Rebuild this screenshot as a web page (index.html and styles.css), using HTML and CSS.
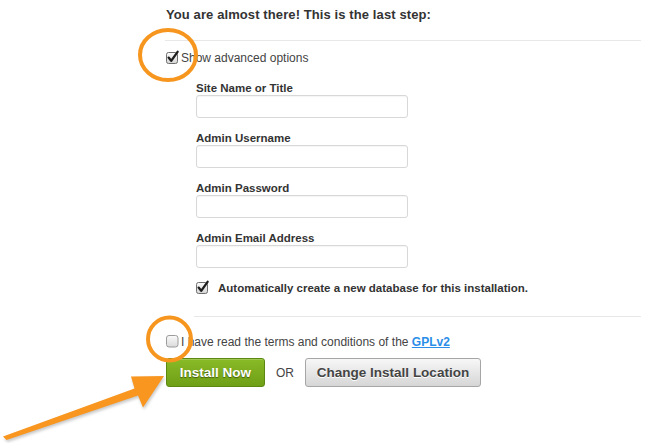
FILE: index.html
```html
<!DOCTYPE html>
<html>
<head>
<meta charset="utf-8">
<link rel="stylesheet" href="styles.css">
</head>
<body>
<div class="page">
  <div class="main">
    <h1 class="title">You are almost there! This is the last step:</h1>
    <div class="rule"></div>
    <label class="check-row adv">
      <span class="cb">
        <svg width="14" height="14" viewBox="0 0 14 14"><defs><linearGradient id="g1" x1="0" y1="0" x2="0" y2="1"><stop offset="0" stop-color="#fdfdfd"/><stop offset="1" stop-color="#d4d4d4"/></linearGradient></defs><rect x="0.5" y="1.5" width="11" height="11" rx="2" fill="url(#g1)" stroke="#6f6f6f"/><path d="M2.6 6.6 L5.2 9.8 L11.6 0.8" fill="none" stroke="#1e1e1e" stroke-width="2.3" stroke-linecap="round" stroke-linejoin="round"/></svg>
      </span>
      <span class="adv-text">Show advanced options</span>
    </label>
    <div class="fields">
      <div class="field">
        <label class="field-label">Site Name or Title</label>
        <input class="field-input" type="text">
      </div>
      <div class="field">
        <label class="field-label">Admin Username</label>
        <input class="field-input" type="text">
      </div>
      <div class="field">
        <label class="field-label">Admin Password</label>
        <input class="field-input" type="text">
      </div>
      <div class="field">
        <label class="field-label">Admin Email Address</label>
        <input class="field-input" type="text">
      </div>
      <label class="check-row auto">
        <span class="cb">
          <svg width="14" height="14" viewBox="0 0 14 14"><defs><linearGradient id="g2" x1="0" y1="0" x2="0" y2="1"><stop offset="0" stop-color="#fdfdfd"/><stop offset="1" stop-color="#d4d4d4"/></linearGradient></defs><rect x="0.5" y="1.5" width="11" height="11" rx="2" fill="url(#g2)" stroke="#6f6f6f"/><path d="M2.6 6.6 L5.2 9.8 L11.6 0.8" fill="none" stroke="#1e1e1e" stroke-width="2.3" stroke-linecap="round" stroke-linejoin="round"/></svg>
        </span>
        <span class="auto-text">Automatically create a new database for this installation.</span>
      </label>
    </div>
    <div class="rule rule-short"></div>
    <label class="check-row terms">
      <span class="cb">
        <svg width="14" height="14" viewBox="0 0 14 14"><defs><linearGradient id="g3" x1="0" y1="0" x2="0" y2="1"><stop offset="0" stop-color="#fbfbfb"/><stop offset="1" stop-color="#dadada"/></linearGradient></defs><rect x="0.5" y="0.5" width="11.5" height="11.5" rx="2.5" fill="url(#g3)" stroke="#9c9c9c"/></svg>
      </span>
      <span class="terms-text">I have read the terms and conditions of the <a class="link" href="#">GPLv2</a></span>
    </label>
    <div class="actions">
      <button class="btn btn-green">Install Now</button>
      <span class="or">OR</span>
      <button class="btn btn-gray">Change Install Location</button>
    </div>
  </div>
  <svg class="annot" width="648" height="443" viewBox="0 0 648 443">
    <ellipse class="ring" cx="168" cy="55" rx="28" ry="25"/>
    <circle class="ring" cx="169.5" cy="339" r="21.5"/>
    <polygon class="arrow" points="3,436.5 134.5,388.5 131,376.5 164,376 143,407.5 138,395.5 6.5,440"/>
  </svg>
</div>
</body>
</html>
```

FILE: styles.css
```css
html, body {
  margin: 0;
  padding: 0;
  background: #ffffff;
}

body {
  font-family: "Liberation Sans", Arial, sans-serif;
  color: #444;
  width: 648px;
  height: 443px;
  overflow: hidden;
}

.page {
  position: relative;
  width: 648px;
  height: 443px;
}

.main {
  margin-left: 165px;
  width: 476px;
  padding-top: 7px;
}

.title {
  margin: 0 0 0 1px;
  font-size: 13px;
  line-height: 16px;
  font-weight: bold;
  color: #333;
  letter-spacing: 0.1px;
}

.rule {
  margin-top: 17px;
  height: 1px;
  background: #e8e8e8;
}

.rule-short {
  margin-top: 22px;
  margin-left: 29px;
  width: 447px;
}

.check-row {
  display: flex;
  align-items: center;
  height: 13px;
  font-size: 12px;
  line-height: 14px;
}

.cb {
  display: block;
  width: 13px;
  height: 13px;
  flex: none;
}

.cb svg {
  display: block;
  overflow: visible;
}

.adv {
  margin-top: 10px;
  margin-left: 1px;
}

.adv-text {
  margin-left: 2px;
  color: #444;
}

.fields {
  margin-top: 17px;
  margin-left: 31px;
}

.field {
  margin-bottom: 13px;
}

.field-label {
  display: block;
  font-size: 11.5px;
  line-height: 14px;
  font-weight: bold;
  color: #333;
}

.field-input {
  display: block;
  box-sizing: border-box;
  width: 212px;
  height: 23px;
  margin: 0;
  padding: 0 5px;
  border: 1px solid #d8d8d8;
  border-radius: 3px;
  background: #fff;
  box-shadow: inset 0 1px 1px rgba(0, 0, 0, 0.04);
  outline: none;
}

.auto-text {
  margin-left: 9px;
  font-size: 11.5px;
  font-weight: bold;
  color: #333;
}

.terms {
  margin-top: 18px;
  margin-left: 1px;
}

.terms-text {
  margin-left: 2px;
  color: #444;
  white-space: nowrap;
}

.link {
  color: #2a8ee8;
  font-weight: bold;
  text-decoration: underline;
}

.actions {
  margin-top: 10px;
  margin-left: 1px;
  display: flex;
  align-items: center;
  gap: 11px;
  height: 29px;
}

.btn {
  box-sizing: border-box;
  height: 29px;
  margin: 0;
  border-radius: 3px;
  font-family: "Liberation Sans", Arial, sans-serif;
  font-size: 13.5px;
  font-weight: bold;
  line-height: 27px;
  cursor: pointer;
}

.btn-green {
  width: 99px;
  padding: 0;
  color: #fff;
  background: linear-gradient(#89ba27, #6f9f16);
  border: 1px solid #5c880f;
  text-shadow: 0 1px 1px rgba(0, 0, 0, 0.45);
  box-shadow: inset 0 1px 0 rgba(255, 255, 255, 0.2);
}

.btn-gray {
  width: 176px;
  padding: 0;
  color: #444;
  background: linear-gradient(#f7f7f7, #d6d6d6);
  border: 1px solid #a6a6a6;
  text-shadow: 0 1px 0 #fff;
}

.or {
  font-size: 12px;
  color: #444;
}

.annot {
  position: absolute;
  left: 0;
  top: 0;
  pointer-events: none;
}

.ring {
  fill: none;
  stroke: #f7961f;
  stroke-width: 4;
}

.arrow {
  fill: #f8961f;
  filter: drop-shadow(1px 2px 1.5px rgba(0, 0, 0, 0.22));
}
```
